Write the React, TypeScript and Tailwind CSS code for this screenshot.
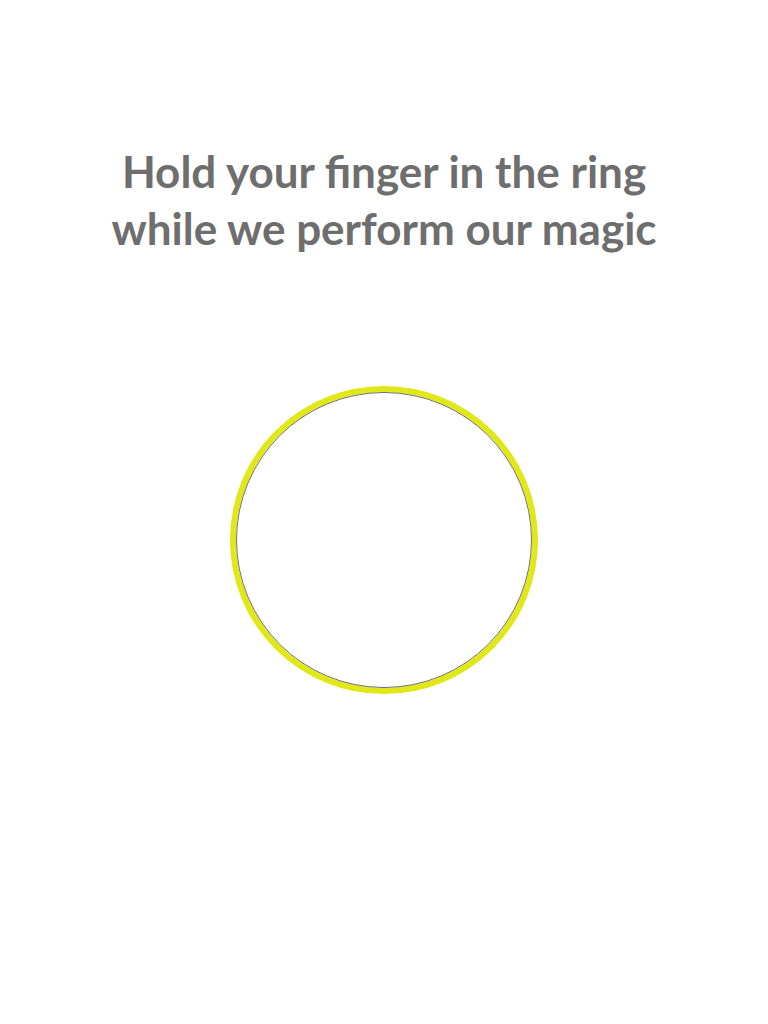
import React from "react";

const App: React.FC = () => {
  return (
    <div className="min-h-screen w-full bg-white flex flex-col items-center">
      <h1
        className="mt-[143px] text-center text-[44px] leading-[57px] font-bold text-[#6e6e6e]"
        style={{ fontFamily: "Lato, 'Open Sans', sans-serif" }}
      >
        Hold your finger in the ring
        <br />
        while we perform our magic
      </h1>

      {/* ring */}
      <div className="mt-[129px] w-[308px] h-[308px] rounded-full border-[6px] border-[#e0e817]">
        <div className="w-full h-full rounded-full border border-[#707070]" />
      </div>
    </div>
  );
};

export default App;
